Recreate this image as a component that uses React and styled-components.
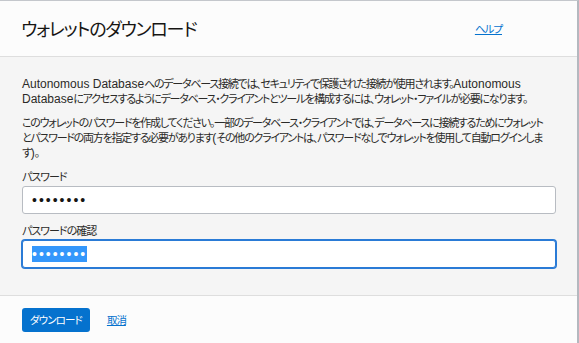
import React, { useEffect, useRef } from 'react';
import styled, { createGlobalStyle } from 'styled-components';

const GlobalStyle = createGlobalStyle`
  html, body {
    margin: 0;
    padding: 0;
    background: #ffffff;
  }
  body {
    font-family: "Liberation Sans", "Noto Sans CJK JP", sans-serif;
    color: #161513;
  }
`;

const Dialog = styled.div`
  width: 579px;
  height: 343px;
  box-sizing: border-box;
  border-top: 1px solid #c4c7cc;
  border-right: 2px solid #b4b8bf;
  display: flex;
  flex-direction: column;
  font-feature-settings: "palt";
`;

const Header = styled.div`
  height: 56px;
  flex-shrink: 0;
  box-sizing: border-box;
  background: #fcfcfc;
  border-bottom: 1px solid #dedede;
  display: flex;
  align-items: center;
  justify-content: space-between;
  padding: 0 75px 0 21px;
`;

const Title = styled.h1`
  margin: 0;
  font-size: 18px;
  font-weight: 400;
  letter-spacing: -1.2px;
  color: #161513;
  padding-bottom: 2px;
`;

const Link = styled.a`
  color: #0572ce;
  text-decoration: underline;
  font-size: 10.5px;
  letter-spacing: -1px;
  cursor: pointer;
`;

const Body = styled.div`
  flex: 1;
  background: #f5f5f5;
  padding: 20px 22px 0 22px;
  border-bottom: 1px solid #dedede;
`;

const Text = styled.p`
  margin: 0 0 9px 0;
  font-size: 11px;
  line-height: 15px;
  letter-spacing: -1.25px;
  color: #2b2a28;
  white-space: nowrap;
`;

const Latin = styled.span`
  font-size: 12px;
  letter-spacing: 0;
`;

const Field = styled.div`
  display: flex;
  flex-direction: column;
  margin-top: ${(p) => p.$top || 0}px;
`;

const Label = styled.label`
  font-size: 11px;
  line-height: 15px;
  letter-spacing: -1px;
  color: #2b2a28;
  margin-bottom: ${(p) => p.$gap || 1}px;
`;

const Input = styled.input`
  width: 534px;
  height: 28px;
  box-sizing: border-box;
  border: 1px solid ${(p) => (p.$active ? '#2a7bd6' : '#b8bcc2')};
  border-radius: 3px;
  box-shadow: ${(p) => (p.$active ? '0 0 0 1px #2a7bd6' : 'none')};
  background: #ffffff;
  padding: 0 9px;
  font-family: "Liberation Sans", sans-serif;
  font-size: 14px;
  letter-spacing: 2px;
  color: #161513;
  outline: none;
  &::selection {
    background: #3497fb;
    color: #ffffff;
  }
`;

const Footer = styled.div`
  height: 47px;
  flex-shrink: 0;
  box-sizing: border-box;
  background: #fcfcfc;
  display: flex;
  align-items: center;
  gap: 17px;
  padding: 0 22px;
`;

const Button = styled.button`
  height: 24px;
  padding: 0 8px;
  border: none;
  border-radius: 3px;
  background: #0572ce;
  color: #ffffff;
  font-family: "Liberation Sans", "Noto Sans CJK JP", sans-serif;
  font-feature-settings: "palt";
  font-size: 10.5px;
  letter-spacing: -0.9px;
  cursor: pointer;
`;

export default function App() {
  const confirmRef = useRef(null);

  useEffect(() => {
    if (confirmRef.current) {
      confirmRef.current.focus();
      confirmRef.current.select();
    }
  }, []);

  return (
    <>
      <GlobalStyle />
      <Dialog>
        <Header>
          <Title>ウォレットのダウンロード</Title>
          <Link>ヘルプ</Link>
        </Header>
        <Body>
          <Text>
            <Latin>Autonomous Database</Latin>へのデータベース接続では、セキュリティで保護された接続が使用されます。<Latin>Autonomous</Latin>
            <br />
            <Latin>Database</Latin>にアクセスするようにデータベース・クライアントとツールを構成するには、ウォレット・ファイルが必要になります。
          </Text>
          <Text>
            このウォレットのパスワードを作成してください。一部のデータベース・クライアントでは、データベースに接続するためにウォレット
            <br />
            とパスワードの両方を指定する必要があります<Latin>(</Latin>その他のクライアントは、パスワードなしでウォレットを使用して自動ログインしま
            <br />
            す<Latin>)</Latin>。
          </Text>
          <Field $top={5}>
            <Label>パスワード</Label>
            <Input type="password" defaultValue="password" readOnly />
          </Field>
          <Field $top={10}>
            <Label>パスワードの確認</Label>
            <Input ref={confirmRef} type="password" defaultValue="password" readOnly $active />
          </Field>
        </Body>
        <Footer>
          <Button>ダウンロード</Button>
          <Link>取消</Link>
        </Footer>
      </Dialog>
    </>
  );
}
